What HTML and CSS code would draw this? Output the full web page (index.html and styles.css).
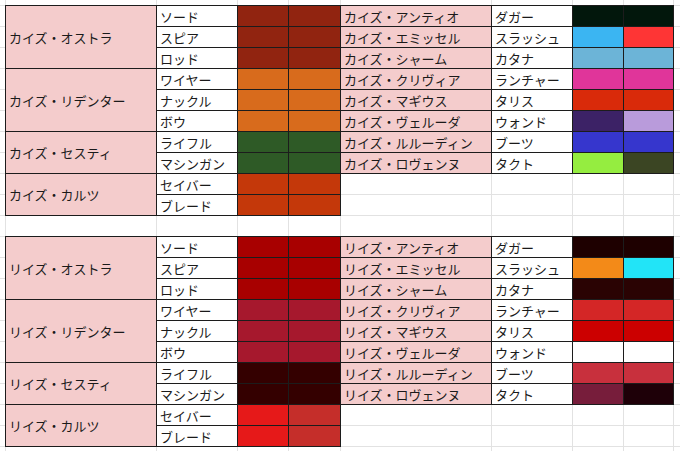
FILE: index.html
```html
<!DOCTYPE html>
<html lang="ja">
<head>
<meta charset="utf-8">
<title>カイズ・リイズ</title>
<link rel="stylesheet" href="styles.css">
</head>
<body>
<div class="sheet">
  <div class="block">
    <div class="tbl tbl-left">
      <div class="cell name span3">カイズ・オストラ</div>
      <div class="cell weapon">ソード</div><div class="cell" style="background:#912410"></div><div class="cell" style="background:#912410"></div>
      <div class="cell weapon">スピア</div><div class="cell" style="background:#912410"></div><div class="cell" style="background:#912410"></div>
      <div class="cell weapon">ロッド</div><div class="cell" style="background:#912410"></div><div class="cell" style="background:#912410"></div>
      <div class="cell name span3">カイズ・リデンター</div>
      <div class="cell weapon">ワイヤー</div><div class="cell" style="background:#d86b1c"></div><div class="cell" style="background:#d86b1c"></div>
      <div class="cell weapon">ナックル</div><div class="cell" style="background:#d86b1c"></div><div class="cell" style="background:#d86b1c"></div>
      <div class="cell weapon">ボウ</div><div class="cell" style="background:#d86b1c"></div><div class="cell" style="background:#d86b1c"></div>
      <div class="cell name span2">カイズ・セスティ</div>
      <div class="cell weapon">ライフル</div><div class="cell" style="background:#2e5a26"></div><div class="cell" style="background:#2e5a26"></div>
      <div class="cell weapon">マシンガン</div><div class="cell" style="background:#2e5a26"></div><div class="cell" style="background:#2e5a26"></div>
      <div class="cell name span2">カイズ・カルツ</div>
      <div class="cell weapon">セイバー</div><div class="cell" style="background:#c4380a"></div><div class="cell" style="background:#c4380a"></div>
      <div class="cell weapon">ブレード</div><div class="cell" style="background:#c4380a"></div><div class="cell" style="background:#c4380a"></div>
    </div>
    <div class="tbl tbl-right">
      <div class="cell name">カイズ・アンティオ</div><div class="cell weapon">ダガー</div><div class="cell" style="background:#02170c"></div><div class="cell" style="background:#02170c"></div>
      <div class="cell name">カイズ・エミッセル</div><div class="cell weapon">スラッシュ</div><div class="cell" style="background:#3bb5f2"></div><div class="cell" style="background:#fe3535"></div>
      <div class="cell name">カイズ・シャーム</div><div class="cell weapon">カタナ</div><div class="cell" style="background:#6cb4d7"></div><div class="cell" style="background:#6cb4d7"></div>
      <div class="cell name">カイズ・クリヴィア</div><div class="cell weapon">ランチャー</div><div class="cell" style="background:#e0359a"></div><div class="cell" style="background:#e0359a"></div>
      <div class="cell name">カイズ・マギウス</div><div class="cell weapon">タリス</div><div class="cell" style="background:#d92a0a"></div><div class="cell" style="background:#d92a0a"></div>
      <div class="cell name">カイズ・ヴェルーダ</div><div class="cell weapon">ウォンド</div><div class="cell" style="background:#3c2266"></div><div class="cell" style="background:#b99bdb"></div>
      <div class="cell name">カイズ・ルルーディン</div><div class="cell weapon">ブーツ</div><div class="cell" style="background:#3636cd"></div><div class="cell" style="background:#3636cd"></div>
      <div class="cell name">カイズ・ロヴェンヌ</div><div class="cell weapon">タクト</div><div class="cell" style="background:#95ed40"></div><div class="cell" style="background:#3b4523"></div>
    </div>
  </div>
  <div class="block">
    <div class="tbl tbl-left">
      <div class="cell name span3">リイズ・オストラ</div>
      <div class="cell weapon">ソード</div><div class="cell" style="background:#a80000"></div><div class="cell" style="background:#a80000"></div>
      <div class="cell weapon">スピア</div><div class="cell" style="background:#a80000"></div><div class="cell" style="background:#a80000"></div>
      <div class="cell weapon">ロッド</div><div class="cell" style="background:#a80000"></div><div class="cell" style="background:#a80000"></div>
      <div class="cell name span3">リイズ・リデンター</div>
      <div class="cell weapon">ワイヤー</div><div class="cell" style="background:#a6182d"></div><div class="cell" style="background:#a6182d"></div>
      <div class="cell weapon">ナックル</div><div class="cell" style="background:#a6182d"></div><div class="cell" style="background:#a6182d"></div>
      <div class="cell weapon">ボウ</div><div class="cell" style="background:#a6182d"></div><div class="cell" style="background:#a6182d"></div>
      <div class="cell name span2">リイズ・セスティ</div>
      <div class="cell weapon">ライフル</div><div class="cell" style="background:#340000"></div><div class="cell" style="background:#340000"></div>
      <div class="cell weapon">マシンガン</div><div class="cell" style="background:#340000"></div><div class="cell" style="background:#340000"></div>
      <div class="cell name span2">リイズ・カルツ</div>
      <div class="cell weapon">セイバー</div><div class="cell" style="background:#e61919"></div><div class="cell" style="background:#c52e2a"></div>
      <div class="cell weapon">ブレード</div><div class="cell" style="background:#e61919"></div><div class="cell" style="background:#c52e2a"></div>
    </div>
    <div class="tbl tbl-right">
      <div class="cell name">リイズ・アンティオ</div><div class="cell weapon">ダガー</div><div class="cell" style="background:#1e0000"></div><div class="cell" style="background:#1e0000"></div>
      <div class="cell name">リイズ・エミッセル</div><div class="cell weapon">スラッシュ</div><div class="cell" style="background:#f38a18"></div><div class="cell" style="background:#22e4f7"></div>
      <div class="cell name">リイズ・シャーム</div><div class="cell weapon">カタナ</div><div class="cell" style="background:#2a0303"></div><div class="cell" style="background:#2a0303"></div>
      <div class="cell name">リイズ・クリヴィア</div><div class="cell weapon">ランチャー</div><div class="cell" style="background:#d42626"></div><div class="cell" style="background:#d42626"></div>
      <div class="cell name">リイズ・マギウス</div><div class="cell weapon">タリス</div><div class="cell" style="background:#cc0000"></div><div class="cell" style="background:#cc0000"></div>
      <div class="cell name">リイズ・ヴェルーダ</div><div class="cell weapon">ウォンド</div><div class="cell" style="background:#ffffff"></div><div class="cell" style="background:#ffffff"></div>
      <div class="cell name">リイズ・ルルーディン</div><div class="cell weapon">ブーツ</div><div class="cell" style="background:#c8303d"></div><div class="cell" style="background:#c8303d"></div>
      <div class="cell name">リイズ・ロヴェンヌ</div><div class="cell weapon">タクト</div><div class="cell" style="background:#771d3b"></div><div class="cell" style="background:#1e0008"></div>
    </div>
  </div>
</div>
</body>
</html>
```
FILE: styles.css
```css
html, body {
  margin: 0;
  padding: 0;
}

body {
  width: 680px;
  height: 451px;
  overflow: hidden;
  font-family: "Noto Sans CJK JP", "Noto Sans", sans-serif;
  font-size: 13px;
  color: #1a1a1a;
  background-color: #ffffff;
  background-image:
    linear-gradient(#e2e2e2, #e2e2e2),
    linear-gradient(#e2e2e2, #e2e2e2),
    linear-gradient(#e2e2e2, #e2e2e2),
    linear-gradient(#e2e2e2, #e2e2e2),
    linear-gradient(#e2e2e2, #e2e2e2),
    linear-gradient(#e2e2e2, #e2e2e2),
    linear-gradient(#e2e2e2, #e2e2e2),
    linear-gradient(#e2e2e2, #e2e2e2),
    linear-gradient(#e2e2e2, #e2e2e2),
    linear-gradient(to bottom, transparent 20px, #e2e2e2 20px);
  background-size:
    1px 100%, 1px 100%, 1px 100%, 1px 100%, 1px 100%,
    1px 100%, 1px 100%, 1px 100%, 1px 100%,
    100% 21px;
  background-position:
    5px 0, 156px 0, 237px 0, 288px 0, 340px 0,
    491px 0, 572px 0, 623px 0, 673px 0,
    0 6px;
  background-repeat:
    no-repeat, no-repeat, no-repeat, no-repeat, no-repeat,
    no-repeat, no-repeat, no-repeat, no-repeat,
    repeat-y;
}

.sheet {
  display: flex;
  flex-direction: column;
  gap: 20px;
  padding: 5px 0 0 5px;
}

.block {
  display: flex;
  align-items: flex-start;
}

.tbl {
  display: grid;
  grid-auto-rows: 21px;
  border-top: 1px solid #1c1c1c;
}

.tbl-left {
  grid-template-columns: 151px 81px 51px 52px;
  border-left: 1px solid #1c1c1c;
}

.tbl-right {
  grid-template-columns: 151px 81px 51px 50px;
}

.cell {
  box-sizing: border-box;
  border-right: 1px solid #1c1c1c;
  border-bottom: 1px solid #1c1c1c;
  display: flex;
  align-items: center;
  padding: 0 3px;
  white-space: nowrap;
  overflow: hidden;
  line-height: 1;
}

.name {
  background: #f4cccc;
}

.weapon {
  background: #ffffff;
}

.span3 {
  grid-row: span 3;
}

.span2 {
  grid-row: span 2;
}
```
